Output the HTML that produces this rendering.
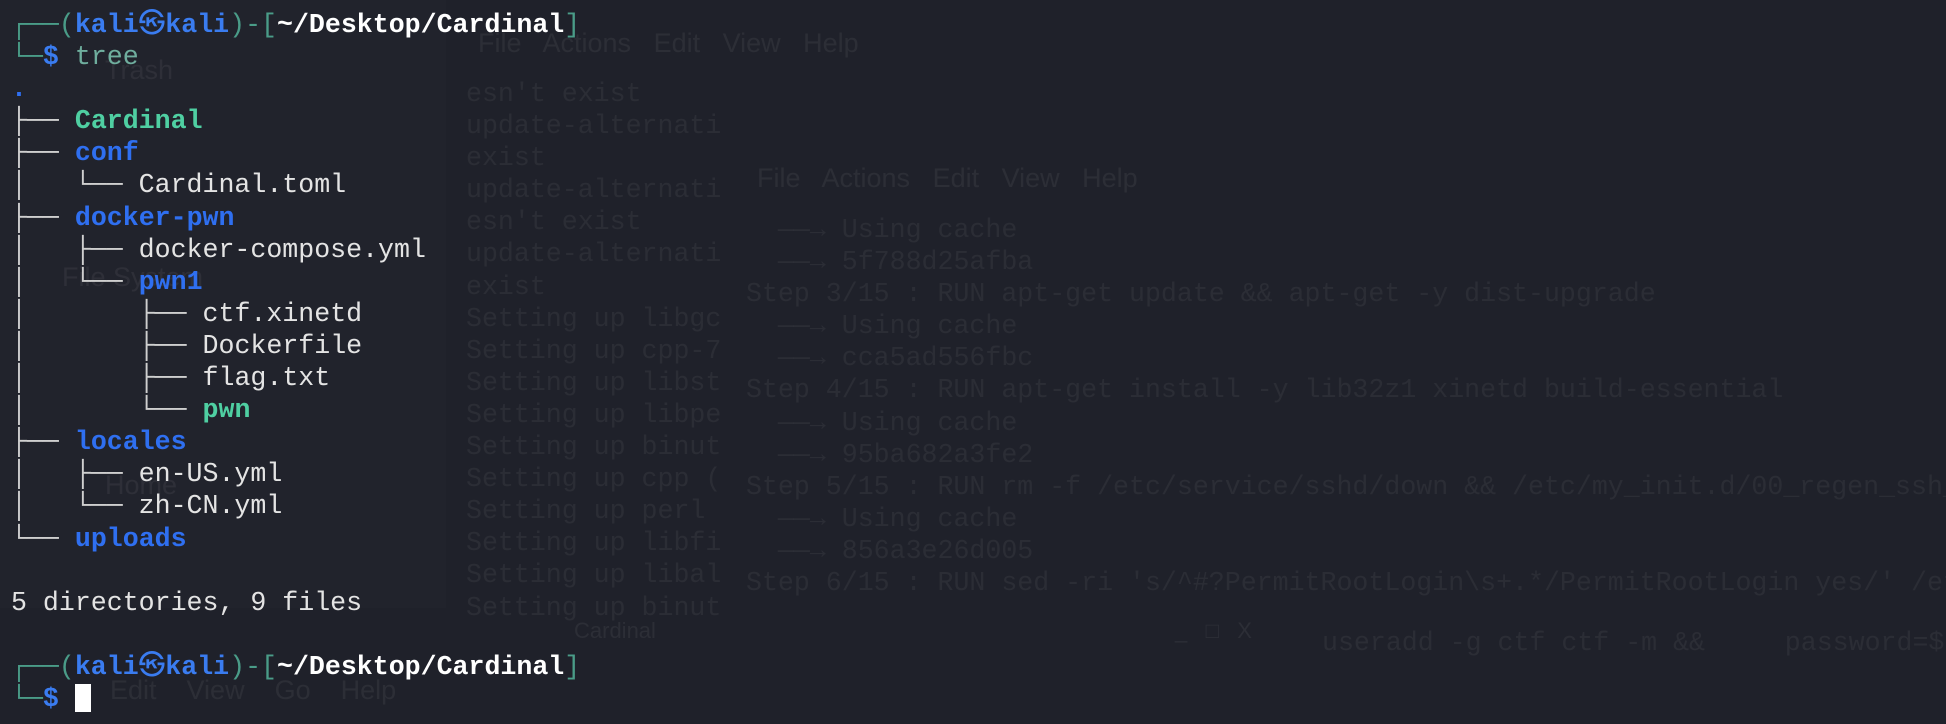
<!DOCTYPE html>
<html><head><meta charset="utf-8"><style>
html,body{margin:0;padding:0;}
body{width:1946px;height:724px;background:#1f212a;position:relative;overflow:hidden;font-family:"Liberation Mono","DejaVu Sans Mono","Noto Sans CJK JP",monospace;}
.panel{position:absolute;left:0;top:0;width:446px;height:608px;background:#21232c;}
.f{position:absolute;color:rgba(255,255,255,0.055);font-size:26.6px;line-height:32.1px;white-space:pre;}
.s{position:absolute;color:rgba(255,255,255,0.06);font-family:"Liberation Sans",sans-serif;font-size:27px;white-space:pre;}
pre{position:absolute;left:11px;top:9px;margin:0;font-family:inherit;font-size:26.6px;line-height:32.1px;color:#e4e4e4;}
.g{color:#4a9c88}.k{color:#3a7cf0;font-weight:bold}.w{color:#fff;font-weight:bold}
.d{color:#2f6ff0;font-weight:bold}.x{color:#4fcfa2;font-weight:bold}.l{color:#cfcfcf}.t{color:#6fae9e}
.cur{display:inline-block;width:16px;height:28px;background:#fff;vertical-align:-6px;}
</style></head><body>
<div class="panel"></div>
<div class="s" style="left:478px;top:28px">File   Actions   Edit   View   Help</div>
<div class="s" style="left:105px;top:55px">Trash</div>
<div class="s" style="left:62px;top:262px">File System</div>
<div class="s" style="left:105px;top:470px">Home</div>
<div class="s" style="left:757px;top:163px">File   Actions   Edit   View   Help</div>
<div class="s" style="left:110px;top:675px">Edit    View    Go    Help</div>
<div class="s" style="left:574px;top:618px;font-size:22px">Cardinal</div>
<div class="s" style="left:1175px;top:618px;font-size:22px">_   □   X</div>
<div class="f" style="left:466px;top:78px">esn't exist
update-alternati
exist
update-alternati
esn't exist
update-alternati
exist
Setting up libgc
Setting up cpp-7
Setting up libst
Setting up libpe
Setting up binut
Setting up cpp (
Setting up perl
Setting up libfi
Setting up libal
Setting up binut</div>
<div class="f" style="left:746px;top:214px;background:#1f212a">  ——→ Using cache
  ——→ 5f788d25afba
Step 3/15 : RUN apt-get update && apt-get -y dist-upgrade
  ——→ Using cache
  ——→ cca5ad556fbc
Step 4/15 : RUN apt-get install -y lib32z1 xinetd build-essential
  ——→ Using cache
  ——→ 95ba682a3fe2
Step 5/15 : RUN rm -f /etc/service/sshd/down && /etc/my_init.d/00_regen_ssh_host_keys.sh
  ——→ Using cache
  ——→ 856a3e26d005
Step 6/15 : RUN sed -ri 's/^#?PermitRootLogin\s+.*/PermitRootLogin yes/' /etc/ssh/sshd_config</div>
<div class="f" style="left:1322px;top:627px">useradd -g ctf ctf -m &&     password=$</div>
<pre><span class="g">┌──(</span><span class="k">kali㉿kali</span><span class="g">)-[</span><span class="w">~/Desktop/Cardinal</span><span class="g">]</span>
<span class="g">└─</span><span class="k">$</span> <span class="t">tree</span>
<span class="d">.</span>
<span class="l">├──</span> <span class="x">Cardinal</span>
<span class="l">├──</span> <span class="d">conf</span>
<span class="l">│   └──</span> Cardinal.toml
<span class="l">├──</span> <span class="d">docker-pwn</span>
<span class="l">│   ├──</span> docker-compose.yml
<span class="l">│   └──</span> <span class="d">pwn1</span>
<span class="l">│       ├──</span> ctf.xinetd
<span class="l">│       ├──</span> Dockerfile
<span class="l">│       ├──</span> flag.txt
<span class="l">│       └──</span> <span class="x">pwn</span>
<span class="l">├──</span> <span class="d">locales</span>
<span class="l">│   ├──</span> en-US.yml
<span class="l">│   └──</span> zh-CN.yml
<span class="l">└──</span> <span class="d">uploads</span>

5 directories, 9 files

<span class="g">┌──(</span><span class="k">kali㉿kali</span><span class="g">)-[</span><span class="w">~/Desktop/Cardinal</span><span class="g">]</span>
<span class="g">└─</span><span class="k">$</span> <span class="cur"></span></pre>
</body></html>
